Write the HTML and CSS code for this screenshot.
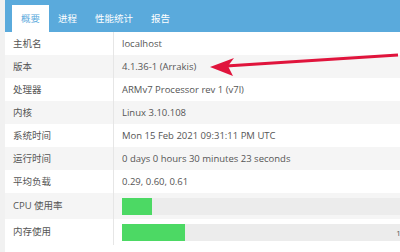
FILE: index.html
```html
<!DOCTYPE html>
<html lang="zh">
<head>
    <meta charset="UTF-8">
    <title>概要</title>
    <link rel="stylesheet" href="styles.css">
</head>
<body>
    <div class="page">
        <div class="tabs">
            <div class="tab active">概要</div>
            <div class="tab">进程</div>
            <div class="tab">性能统计</div>
            <div class="tab">报告</div>
        </div>

        <div class="info">
            <div class="row"><div class="label">主机名</div><div class="value">localhost</div></div>
            <div class="row"><div class="label">版本</div><div class="value">4.1.36-1 (Arrakis)</div></div>
            <div class="row"><div class="label">处理器</div><div class="value">ARMv7 Processor rev 1 (v7l)</div></div>
            <div class="row"><div class="label">内核</div><div class="value">Linux 3.10.108</div></div>
            <div class="row"><div class="label">系统时间</div><div class="value">Mon 15 Feb 2021 09:31:11 PM UTC</div></div>
            <div class="row"><div class="label">运行时间</div><div class="value">0 days 0 hours 30 minutes 23 seconds</div></div>
            <div class="row"><div class="label">平均负载</div><div class="value">0.29, 0.60, 0.61</div></div>
            <div class="row bar-row">
                <div class="label">CPU 使用率</div>
                <div class="value"><div class="track"><div class="fill" style="width: 30px"></div></div></div>
            </div>
            <div class="row bar-row">
                <div class="label">内存使用</div>
                <div class="value"><div class="track"><div class="fill" style="width: 63px"></div><span class="pct">19%</span></div></div>
            </div>
        </div>

        <!-- annotation arrow pointing at the version -->
        <svg class="arrow" width="400" height="252" viewBox="0 0 400 252">
            <line x1="226" y1="66" x2="398" y2="55" stroke="#e0143c" stroke-width="3"/>
            <polygon points="210,67 234,58 228,66 233,76" fill="#e0143c"/>
        </svg>
    </div>
</body>
</html>
```

FILE: styles.css
```css
html, body {
    height: 100%;
}

body {
    margin: 0;
    background: #f1f1f1;
    font-family: "Open Sans", "Noto Sans CJK SC", sans-serif;
    font-size: 9.5px;
    color: #555;
    overflow: hidden;
}

.page {
    margin-left: 5px;
    height: 100%;
    background: white;
}

.tabs {
    display: flex;
    height: 32px;
    box-sizing: border-box;
    padding: 5px 0 0 7px;
    background: #5aaadc;
}

.tab {
    padding: 0 9px;
    line-height: 27px;
    color: white;
}

.tab.active {
    background: white;
    color: #5aaadc;
}

.row {
    display: grid;
    grid-template-columns: 109px 1fr;
    height: 23px;
    line-height: 23px;
}

.row:nth-child(even) {
    background: #f5f5f5;
}

.bar-row {
    height: 26px;
    line-height: 26px;
}

.label {
    padding-left: 8px;
    border-right: 1px solid #e6e6e6;
    white-space: nowrap;
}

.value {
    padding-left: 8px;
    white-space: nowrap;
}

.bar-row .value {
    display: flex;
    align-items: center;
}

.track {
    position: relative;
    flex: 1;
    display: flex;
    height: 17px;
    margin-right: -20px;
    background: #ececec;
}

.fill {
    background: #4cd964;
}

.pct {
    margin-left: auto;
    padding-right: 8px;
    line-height: 17px;
    font-size: 8px;
}

.arrow {
    position: absolute;
    top: 0;
    left: 0;
}
```
